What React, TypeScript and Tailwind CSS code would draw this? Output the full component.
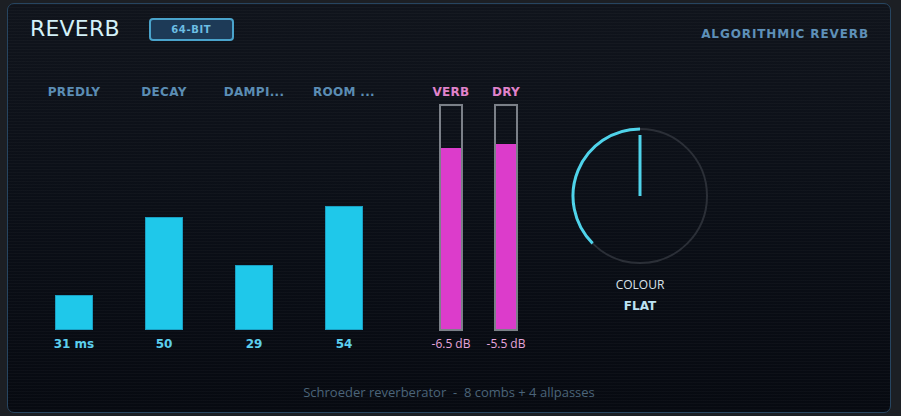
import React from "react";

type Param = { label: string; value: string; height: number };

const params: Param[] = [
  { label: "PREDLY", value: "31 ms", height: 35 },
  { label: "DECAY", value: "50", height: 113 },
  { label: "DAMPI...", value: "29", height: 65 },
  { label: "ROOM ...", value: "54", height: 124 },
];

const meters = [
  { label: "VERB", value: "-6.5 dB", fill: 181 },
  { label: "DRY", value: "-5.5 dB", fill: 185 },
];

function Knob() {
  // arc from -135deg (lower left) to 0deg (top), radius 67
  const cx = 69;
  const cy = 69;
  const r = 67;
  const a = (-135 * Math.PI) / 180;
  const sx = cx + r * Math.sin(a);
  const sy = cy - r * Math.cos(a);
  return (
    <svg width="138" height="138" viewBox="0 0 138 138">
      <circle cx={cx} cy={cy} r={r} fill="none" stroke="#2b2f37" strokeWidth="2" />
      <path
        d={`M ${sx} ${sy} A ${r} ${r} 0 0 1 ${cx} ${cy - r}`}
        fill="none"
        stroke="#4fd3ea"
        strokeWidth="3"
      />
      <line x1={cx} y1={8} x2={cx} y2={69} stroke="#4fd3ea" strokeWidth="3" />
    </svg>
  );
}

export default function App() {
  return (
    <div className="w-[901px] h-[416px] bg-[#1c1f24] pt-[3px] pl-[7px] font-['DejaVu_Sans',sans-serif]">
      <div className="relative w-[884px] h-[410px] rounded-[7px] border border-[#274560] bg-[linear-gradient(180deg,#10141c_0%,#0b0f17_50%,#070a11_100%)] overflow-hidden">
        <div className="absolute inset-0 bg-[repeating-linear-gradient(180deg,rgba(255,255,255,0.025)_0px,rgba(255,255,255,0.025)_1px,transparent_1px,transparent_3px)] pointer-events-none" />
        <div className="relative flex flex-col h-full">
          {/* header */}
          <div className="flex items-center pl-[22px] pr-[21px] pt-[10px] h-[39px]">
            <div className="text-[22px] leading-[26px] text-[#d3f1f8] tracking-[0.2px]">REVERB</div>
            <div className="ml-[29px] mt-[1px] w-[85px] h-[23px] rounded-[4px] border-2 border-[#4aa3cb] bg-[#1d3a57] flex items-center justify-center text-[10px] font-bold text-[#6cbde3] tracking-[0.6px]">
              64-BIT
            </div>
            <div className="ml-auto mt-[10px] text-[12px] font-bold text-[#5e90b8] tracking-[0.9px]">ALGORITHMIC REVERB</div>
          </div>

          {/* controls */}
          <div className="flex items-start pl-[21px] mt-[42px]">
            {params.map((p) => (
              <div key={p.label} className="w-[90px] flex flex-col items-center">
                <div className="h-[14px] text-[12px] leading-[14px] font-bold text-[#5b8db4] whitespace-nowrap tracking-[0.3px]">{p.label}</div>
                <div className="h-[231px] w-full flex items-end justify-center">
                  <div
                    className="w-[38px] bg-[#1fc8ea] border border-[#1a9fc2]"
                    style={{ height: p.height }}
                  />
                </div>
                <div className="mt-[7px] text-[12px] leading-[14px] font-bold text-[#5ccfee] whitespace-nowrap">{p.value}</div>
              </div>
            ))}

            <div className="flex ml-[42px] gap-[15px]">
              {meters.map((m) => (
                <div key={m.label} className="w-[40px] flex flex-col items-center">
                  <div className="h-[14px] text-[12px] leading-[14px] font-bold text-[#e083cb] tracking-[0.3px]">{m.label}</div>
                  <div className="mt-[5px] w-[24px] h-[227px] border-2 border-[#7b8088] flex flex-col justify-end">
                    <div className="w-full bg-[#dc3ccb]" style={{ height: m.fill }} />
                  </div>
                  <div className="mt-[6px] text-[12px] leading-[14px] text-[#e6a6dc] whitespace-nowrap font-['Open_Sans',sans-serif]">
                    {m.value}
                  </div>
                </div>
              ))}
            </div>

            <div className="ml-[45px] mt-[42px] flex flex-col items-center">
              <Knob />
              <div className="mt-[13px] text-[12px] leading-[14px] text-[#dbe3ea] font-['Open_Sans',sans-serif]">COLOUR</div>
              <div className="mt-[7px] text-[12px] leading-[14px] font-bold text-[#bde3f2]">FLAT</div>
            </div>
          </div>

          {/* footer */}
          <div className="mt-auto mb-[12px] text-center text-[13px] leading-[16px] text-[#4b6479] whitespace-pre font-['Open_Sans',sans-serif]">
            {"Schroeder reverberator  -  8 combs + 4 allpasses"}
          </div>
        </div>
      </div>
    </div>
  );
}
